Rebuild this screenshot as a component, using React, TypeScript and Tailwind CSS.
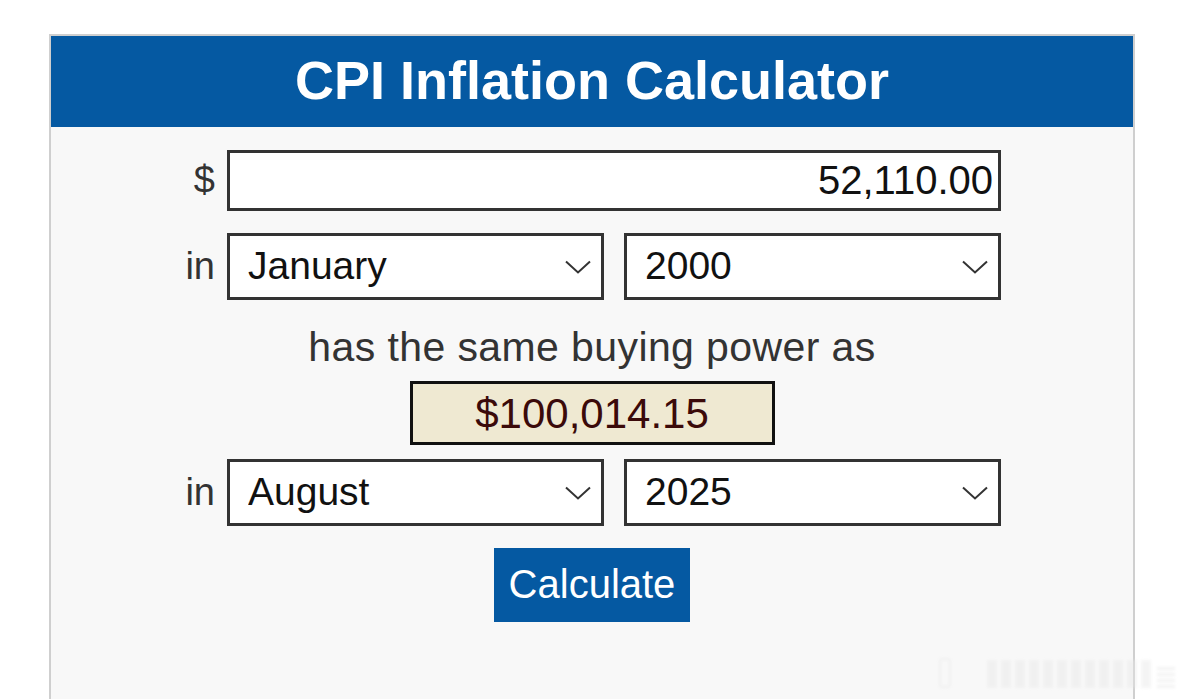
import { useState } from "react";

const MONTHS = [
  "January", "February", "March", "April", "May", "June",
  "July", "August", "September", "October", "November", "December",
];
const YEARS = Array.from({ length: 2025 - 1913 + 1 }, (_, i) => String(1913 + i));

function Chevron() {
  return (
    <svg
      className="pointer-events-none absolute right-[13px] top-1/2 -translate-y-1/2"
      width="26"
      height="14"
      viewBox="0 0 26 14"
      fill="none"
    >
      <path d="M1 1.5 L13 12.5 L25 1.5" stroke="#333" strokeWidth="2" />
    </svg>
  );
}

function Select({ value, options, onChange }: { value: string; options: string[]; onChange: (v: string) => void }) {
  return (
    <div className="relative w-[377px]">
      <select
        value={value}
        onChange={(e) => onChange(e.target.value)}
        className="h-[67px] w-full appearance-none rounded-none border-[3px] border-[#333] bg-white pl-[18px] text-[39px] text-[#111] outline-none"
      >
        {options.map((o) => (
          <option key={o}>{o}</option>
        ))}
      </select>
      <Chevron />
    </div>
  );
}

export default function App() {
  const [amount, setAmount] = useState("52,110.00");
  const [m1, setM1] = useState("January");
  const [y1, setY1] = useState("2000");
  const [m2, setM2] = useState("August");
  const [y2, setY2] = useState("2025");

  return (
    <div className="relative h-[699px] overflow-hidden bg-white pl-[49px] pr-[50px] pt-[34px] font-['Liberation_Sans',Arial,sans-serif]">
      <div className="h-[700px] border-2 border-b-0 border-[#cfcfcf] bg-[#f8f8f8]">
        <div className="flex h-[91px] items-center justify-center bg-[#0559a2] pb-[3px]">
          <h1 className="text-[54px] font-bold text-white">CPI Inflation Calculator</h1>
        </div>

        <div className="mx-auto flex w-[818px] flex-col pt-[23px]">
          <div className="flex items-center gap-3">
            <span className="w-8 text-right text-[38px] text-[#333]">$</span>
            <input
              value={amount}
              onChange={(e) => setAmount(e.target.value)}
              className="h-[61px] w-[774px] border-[3px] border-[#333] bg-white pr-[5px] text-right text-[40px] text-[#111] outline-none"
            />
          </div>

          <div className="mt-[22px] flex items-center gap-3">
            <span className="w-8 text-right text-[38px] text-[#333]">in</span>
            <div className="flex gap-5">
              <Select value={m1} options={MONTHS} onChange={setM1} />
              <Select value={y1} options={YEARS} onChange={setY1} />
            </div>
          </div>

          <p className="mt-[22px] text-center text-[41px] leading-[50px] tracking-[0.4px] text-[#333]">
            has the same buying power as
          </p>

          <div className="mt-[9px] flex justify-center">
            <div className="flex h-[64px] w-[365px] items-center justify-center border-[3px] border-[#111] bg-[#efe9d2] text-[42px] text-[#3b0a0a]">
              $100,014.15
            </div>
          </div>

          <div className="mt-[14px] flex items-center gap-3">
            <span className="w-8 text-right text-[38px] text-[#333]">in</span>
            <div className="flex gap-5">
              <Select value={m2} options={MONTHS} onChange={setM2} />
              <Select value={y2} options={YEARS} onChange={setY2} />
            </div>
          </div>

          <div className="mt-[22px] flex justify-center">
            <button className="h-[74px] w-[196px] bg-[#0559a2] pb-[3px] text-[40px] text-white">Calculate</button>
          </div>
        </div>
      </div>

      {/* faint watermark, bottom right */}
      <div className="pointer-events-none absolute bottom-[11px] right-[10px] flex items-end gap-[6px] opacity-40 blur-[1.5px]">
        <div className="h-[30px] w-[12px] rounded-sm border-2 border-[#e4e4e4]" />
        <div className="ml-[30px] flex gap-[4px]">
          {Array.from({ length: 12 }).map((_, i) => (
            <div key={i} className="h-[28px] w-[10px] bg-[#e6e6e6]" />
          ))}
        </div>
        <div className="flex flex-col gap-[3px]">
          <div className="h-[3px] w-[18px] bg-[#e0e0e0]" />
          <div className="h-[3px] w-[18px] bg-[#e0e0e0]" />
          <div className="h-[3px] w-[18px] bg-[#e0e0e0]" />
          <div className="h-[3px] w-[18px] bg-[#e0e0e0]" />
        </div>
      </div>
    </div>
  );
}
